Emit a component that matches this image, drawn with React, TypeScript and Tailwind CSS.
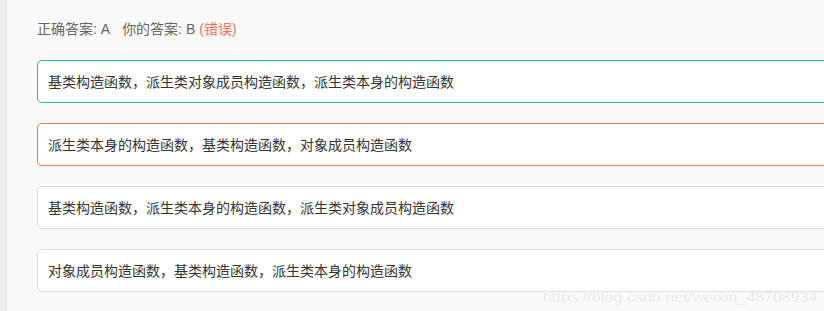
export default function App() {
  const opts = [
    { t: "基类构造函数，派生类对象成员构造函数，派生类本身的构造函数", b: "border-[#1ec39c]" },
    { t: "派生类本身的构造函数，基类构造函数，对象成员构造函数", b: "border-[#f7735b]" },
    { t: "基类构造函数，派生类本身的构造函数，派生类对象成员构造函数", b: "border-[#dcdcdc]" },
    { t: "对象成员构造函数，基类构造函数，派生类本身的构造函数", b: "border-[#dcdcdc]" },
  ];
  return (
    <div
      className="relative flex h-[311px] w-[824px] overflow-hidden bg-[#f9f9f9]"
      style={{ fontFamily: '"Microsoft YaHei", "Noto Sans CJK SC", sans-serif' }}
    >
      <div className="w-[7px] shrink-0 border-r border-[#e6e6e6] bg-[#eeeeee]" />
      <div className="flex flex-1 flex-col pl-[30px] pt-[19px]">
        <div
          className="flex h-[20px] items-center text-[14px] text-[#666]"
          style={{ fontFamily: '"Liberation Sans", "Noto Sans CJK SC", sans-serif' }}
        >
          <span>正确答案: A</span>
          <span className="ml-[12px]">你的答案: B</span>
          <span className="ml-[4px] text-[#f7735b]">(错误)</span>
        </div>
        <div className="mt-[21px] flex flex-col gap-[20px]">
          {opts.map((o, i) => (
            <div
              key={i}
              className={`-mr-[10px] flex h-[43px] items-center rounded-[5px] border bg-white pl-[10px] text-[14px] text-[#333] ${o.b}`}
            >
              {o.t}
            </div>
          ))}
        </div>
      </div>
      <div
        className="absolute left-[543px] top-[285px] text-[15.5px] tracking-[0.3px] text-[#dcdcdc]"
        style={{ fontFamily: '"Liberation Sans", Arial, sans-serif', WebkitTextStroke: "0.4px #ffffff" }}
      >
        https://blog.csdn.net/weixin_48708934
      </div>
    </div>
  );
}
